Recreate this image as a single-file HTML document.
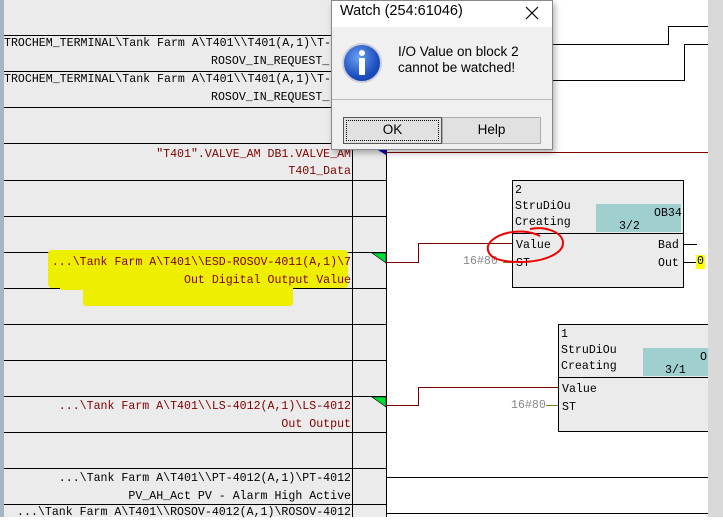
<!DOCTYPE html>
<html><head><meta charset="utf-8"><style>
*{margin:0;padding:0;box-sizing:border-box}
body{width:723px;height:517px;overflow:hidden;background:#fff;position:relative;font-family:"Liberation Mono",monospace;font-size:11.6px}
.a{position:absolute}
.h{position:absolute;height:1px;background:#000}
.v{position:absolute;width:1px;background:#000}
.t{position:absolute;white-space:pre;color:#800000;right:372px;text-align:right;line-height:14px}
.k{color:#000}
.ui{font-family:"Liberation Sans",sans-serif}
</style></head><body>
<div class="a" style="left:0;top:0;width:386px;height:517px;background:#ebebeb"></div>
<div class="a" style="left:0;top:0;width:4px;height:517px;background:#a7b4c6"></div>
<div class="a" style="left:708px;top:0;width:15px;height:517px;background:#d9d9d9"></div>
<div class="h" style="left:4px;top:35px;width:330px"></div>
<div class="h" style="left:4px;top:71px;width:330px"></div>
<div class="h" style="left:4px;top:107px;width:330px"></div>
<div class="h" style="left:4px;top:143px;width:382px"></div>
<div class="h" style="left:4px;top:180px;width:382px"></div>
<div class="h" style="left:4px;top:216px;width:382px"></div>
<div class="h" style="left:4px;top:252px;width:382px"></div>
<div class="h" style="left:4px;top:288px;width:382px"></div>
<div class="h" style="left:4px;top:324px;width:382px"></div>
<div class="h" style="left:4px;top:360px;width:382px"></div>
<div class="h" style="left:4px;top:396px;width:382px"></div>
<div class="h" style="left:4px;top:432px;width:382px"></div>
<div class="h" style="left:4px;top:468px;width:382px"></div>
<div class="h" style="left:4px;top:504px;width:382px"></div>
<div class="v" style="left:352px;top:143px;height:374px"></div>
<div class="v" style="left:386px;top:143px;height:374px"></div>
<div class="a" style="left:48px;top:250px;width:300px;height:38px;background:#eeee00;border-radius:4px"></div>
<div class="a" style="left:60px;top:270px;width:185px;height:20px;background:#eeee00"></div>
<div class="a" style="left:83px;top:284px;width:210px;height:22px;background:#eeee00;border-radius:3px"></div>
<div class="t k" style="left:4px;right:auto;top:37px;text-align:left">TROCHEM_TERMINAL\Tank Farm A\T401\\T401(A,1)\T-</div>
<div class="t k" style="left:211px;right:auto;top:55px;text-align:left">ROSOV_IN_REQUEST_</div>
<div class="t k" style="left:4px;right:auto;top:73px;text-align:left">TROCHEM_TERMINAL\Tank Farm A\T401\\T401(A,1)\T-</div>
<div class="t k" style="left:211px;right:auto;top:91px;text-align:left">ROSOV_IN_REQUEST_</div>
<div class="t" style="top:146px;line-height:17px">"T401".VALVE_AM DB1.VALVE_AM<br>T401_Data</div>
<div class="t" style="top:254px;line-height:18px">...\Tank Farm A\T401\\ESD-ROSOV-4011(A,1)\7<br>Out Digital Output Value</div>
<div class="t" style="top:398px;line-height:18px">...\Tank Farm A\T401\\LS-4012(A,1)\LS-4012<br>Out Output</div>
<div class="t k" style="top:470px;line-height:18px">...\Tank Farm A\T401\\PT-4012(A,1)\PT-4012<br>PV_AH_Act PV - Alarm High Active</div>
<div class="t k" style="top:506px">...\Tank Farm A\T401\\ROSOV-4012(A,1)\ROSOV-4012</div>
<svg class="a" style="left:0;top:0" width="723" height="517">
<polygon points="372,253 386,253 386,263" fill="#00dd33" stroke="#000" stroke-width=".6"/>
<polygon points="372,397 386,397 386,407" fill="#00dd33" stroke="#000" stroke-width=".6"/>
<polygon points="378,150 386,150 386,155" fill="#0000cc"/>
<g fill="none" stroke="#000" stroke-width="1">
<path d="M553 44.5H668.5V26.5H708"/>
<path d="M553 80.5H684.5V44.5H708"/>
<path d="M386 477.5H708M386 513.5H708"/>
<path d="M683 244.5H697M683 262.5H697"/>
</g>
<g fill="none" stroke="#800000" stroke-width="1">
<path d="M386 152.5H708"/>
<path d="M386 262.5H418.5V243.5H512"/>
<path d="M386 405.5H418.5V387.5H558"/>
</g>
<path d="M503 262.5H512M546 405.5H558" stroke="#808000"/>
</svg>
<div class="a" style="left:512px;top:180px;width:172px;height:108px;background:#ebebeb;border:1px solid #000"></div>
<div class="a" style="left:596px;top:204px;width:85px;height:28px;background:#9fcfcf"></div>
<div class="h" style="left:512px;top:233px;width:172px"></div>
<div class="a" style="left:515px;top:183px;line-height:16px;white-space:pre">2<br>StruDiOu<br>Creating</div>
<div class="a" style="left:654px;top:207px">OB34</div>
<div class="a" style="left:619px;top:220px">3/2</div>
<div class="a" style="left:516px;top:237px;line-height:18px">Value<br>ST</div>
<div class="a" style="left:658px;top:237px;line-height:18px">Bad<br>Out</div>
<div class="a" style="left:696px;top:255px;background:#ff0;line-height:14px;padding:0 1px">0</div>
<div class="a" style="left:463px;top:255px;color:#888">16#80</div>
<div class="a" style="left:558px;top:324px;width:160px;height:108px;background:#ebebeb;border:1px solid #000"></div>
<div class="a" style="left:643px;top:348px;width:65px;height:28px;background:#9fcfcf"></div>
<div class="h" style="left:558px;top:377px;width:150px"></div>
<div class="a" style="left:561px;top:327px;line-height:16px;white-space:pre">1<br>StruDiOu<br>Creating</div>
<div class="a" style="left:700px;top:351px">O</div>
<div class="a" style="left:665px;top:364px">3/1</div>
<div class="a" style="left:562px;top:381px;line-height:18px">Value<br>ST</div>
<div class="a" style="left:511px;top:399px;color:#888">16#80</div>
<div class="a" style="left:708px;top:0;width:15px;height:517px;background:#d9d9d9"></div>
<svg class="a" style="left:0;top:0" width="723" height="517"><path d="M540 236C520 226 492 234 488 246C486 258 500 262 520 262C545 262 563 253 563 243C563 232 545 226 530 229" fill="none" stroke="#e00" stroke-width="2"/></svg>
<div class="a ui" style="left:331px;top:0;width:222px;height:150px;background:#f0f0f0;border:1px solid #888;box-shadow:2px 3px 6px rgba(0,0,0,.3)">
<div style="height:26px;background:#fff;font-size:14.5px;padding:2px 0 0 8px;color:#000">Watch (254:61046)</div>
<svg class="a" style="left:193px;top:5px" width="14" height="14"><path d="M1 1L13 13M13 1L1 13" stroke="#000" stroke-width="1.2"/></svg>
<div class="a" style="left:10px;top:42px;width:40px;height:40px;border-radius:50%;background:radial-gradient(circle at 40% 35%,#6aa0f0,#1c4fbf 60%,#0d3490);border:2px solid #ccd"></div>
<div class="a" style="left:27px;top:49px;width:6px;height:6px;border-radius:50%;background:#fff"></div>
<div class="a" style="left:27px;top:57px;width:6px;height:17px;background:#fff;border-radius:1px"></div>
<div class="a" style="left:66px;top:43px;font-size:13.5px;line-height:16px">I/O Value on block 2<br>cannot be watched!</div>
<div class="a" style="left:0;top:98px;width:220px;height:1px;background:#bbb"></div>
<div class="a" style="left:11px;top:116px;width:99px;height:27px;background:#e1e1e1;border:1px solid #555;font-size:13.5px;text-align:center;line-height:24px"><div style="position:absolute;inset:2px;border:1px dotted #000"></div>OK</div>
<div class="a" style="left:110px;top:116px;width:99px;height:27px;background:#e1e1e1;border:1px solid #adadad;font-size:13.5px;text-align:center;line-height:24px">Help</div>
</div>
</body></html>
